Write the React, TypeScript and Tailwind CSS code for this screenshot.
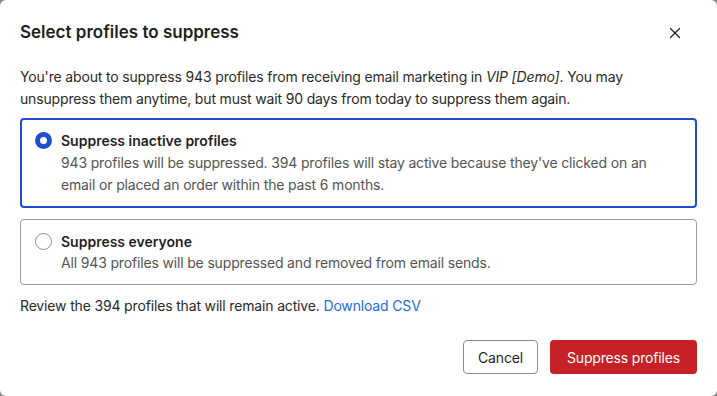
import { X } from "lucide-react"

export default function App() {
  return (
    <div className="h-[396px] w-[717px] bg-[#8a8a8a]">
      <div className="flex h-full w-full flex-col rounded-[6px] bg-white px-5 font-['Inter',sans-serif] tracking-[-0.01em] text-[#1f1f1f]">
        {/* Header */}
        <div className="flex h-[66px] items-center justify-between">
          <h2 className="text-[17px] font-semibold tracking-normal">Select profiles to suppress</h2>
          <button className="mr-[13px] text-[#222]">
            <X className="h-[18px] w-[18px]" strokeWidth={1.6} />
          </button>
        </div>

        <p className="text-[14px] leading-[22px] text-[#2a2a2a]">
          You're about to suppress 943 profiles from receiving email marketing in <i>VIP [Demo]</i>. You may
          unsuppress them anytime, but must wait 90 days from today to suppress them again.
        </p>

        {/* Options */}
        <div className="mt-[8px] flex flex-col gap-[11px]">
          <label className="flex gap-[9px] rounded-[4px] border-2 border-[#1c4fd0] px-[13px] pt-[10px] pb-[10px]">
            <span className="mt-[2px] flex h-[17px] w-[17px] shrink-0 items-center justify-center rounded-full bg-[#1c4fd0]">
              <span className="h-[7px] w-[7px] rounded-full bg-white" />
            </span>
            <div className="text-[14px] leading-[22px]">
              <div className="font-semibold tracking-normal text-[#1f1f1f]">Suppress inactive profiles</div>
              <div className="text-[#545454]">
                943 profiles will be suppressed. 394 profiles will stay active because they've clicked on an email or
                placed an order within the past 6 months.
              </div>
            </div>
          </label>

          <label className="flex gap-[9px] rounded-[4px] border border-[#9a9a9a] px-[14px] pt-[11px] pb-[11px]">
            <span className="mt-[2px] h-[17px] w-[17px] shrink-0 rounded-full border-[1.5px] border-[#8a8a8a]" />
            <div className="text-[14px] leading-[21px]">
              <div className="font-semibold tracking-normal text-[#1f1f1f]">Suppress everyone</div>
              <div className="text-[#545454]">All 943 profiles will be suppressed and removed from email sends.</div>
            </div>
          </label>
        </div>

        <p className="mt-[10px] text-[14px] leading-[22px] text-[#2a2a2a]">
          Review the 394 profiles that will remain active.{" "}
          <a className="text-[#1d6ee8]" href="#">
            Download CSV
          </a>
        </p>

        {/* Footer */}
        <div className="mt-[23px] flex justify-end gap-3">
          <button className="h-[34px] w-[75px] rounded-[4px] border border-[#8c8c8c] text-[14px] text-[#1f1f1f]">
            Cancel
          </button>
          <button className="h-[34px] w-[147px] rounded-[4px] bg-[#c52127] text-[14px] text-white">
            Suppress profiles
          </button>
        </div>
      </div>
    </div>
  )
}
